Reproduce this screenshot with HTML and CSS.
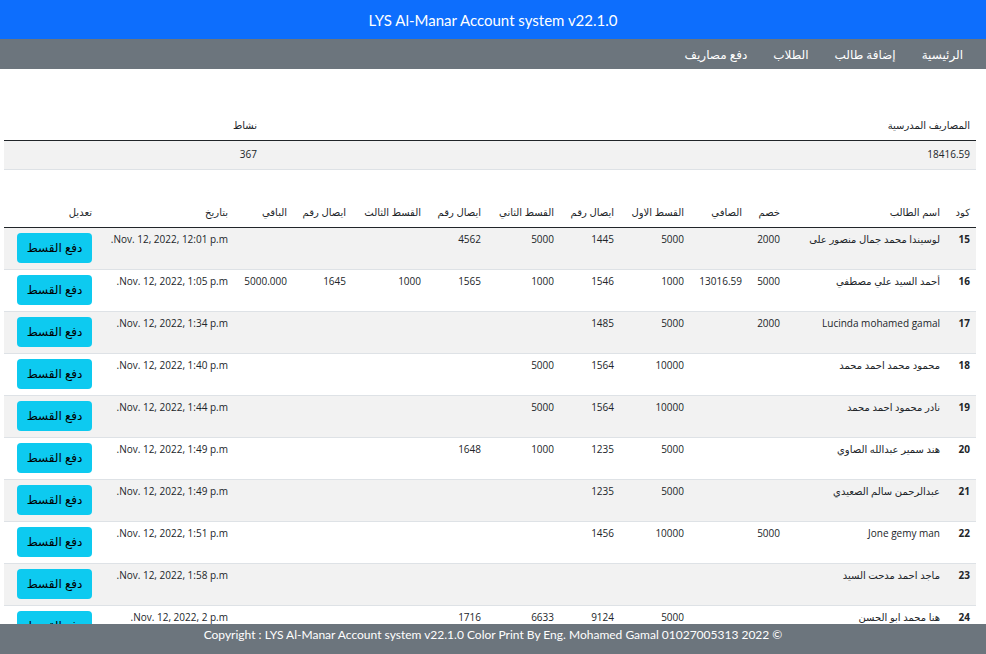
FILE: index.html
```html
<!DOCTYPE html>
<html lang="ar" dir="rtl">
<head>
<meta charset="utf-8">
<title>LYS Al-Manar Account system</title>
<link rel="stylesheet" href="styles.css">
</head>
<body>
<header class="topbar">
  <span class="brand" dir="ltr">LYS Al-Manar Account system v22.1.0</span>
</header>
<nav class="menu">
  <a class="menu-link" href="#">الرئيسية</a>
  <a class="menu-link" href="#">إضافة طالب</a>
  <a class="menu-link" href="#">الطلاب</a>
  <a class="menu-link" href="#">دفع مصاريف</a>
</nav>
<main class="content">
  <table class="grid summary">
    <colgroup>
      <col class="s-fees">
      <col class="s-act">
    </colgroup>
    <thead>
      <tr><th>المصاريف المدرسية</th><th>نشاط</th></tr>
    </thead>
    <tbody>
      <tr class="stripe"><td>18416.59</td><td>367</td></tr>
    </tbody>
  </table>

  <table class="grid students">
    <colgroup>
      <col class="c-code">
      <col class="c-name">
      <col class="c-disc">
      <col class="c-net">
      <col class="c-i1">
      <col class="c-r1">
      <col class="c-i2">
      <col class="c-r2">
      <col class="c-i3">
      <col class="c-r3">
      <col class="c-rest">
      <col class="c-date">
      <col class="c-edit">
    </colgroup>
    <thead>
      <tr>
        <th>كود</th><th>اسم الطالب</th><th>خصم</th><th>الصافي</th><th>القسط الاول</th><th>ايصال رقم</th><th>القسط الثاني</th><th>ايصال رقم</th><th>القسط الثالث</th><th>ايصال رقم</th><th>الباقي</th><th>بتاريخ</th><th>تعديل</th>
      </tr>
    </thead>
    <tbody>
      <tr class="stripe">
        <th class="code">15</th><td>لوسيندا محمد جمال منصور على</td><td>2000</td><td></td><td>5000</td><td>1445</td><td>5000</td><td>4562</td><td></td><td></td><td></td><td>Nov. 12, 2022, 12:01 p.m.</td><td><a class="pay" href="#">دفع القسط</a></td>
      </tr>
      <tr>
        <th class="code">16</th><td>أحمد السيد علي مصطفي</td><td>5000</td><td>13016.59</td><td>1000</td><td>1546</td><td>1000</td><td>1565</td><td>1000</td><td>1645</td><td>5000.000</td><td>Nov. 12, 2022, 1:05 p.m.</td><td><a class="pay" href="#">دفع القسط</a></td>
      </tr>
      <tr class="stripe">
        <th class="code">17</th><td>Lucinda mohamed gamal</td><td>2000</td><td></td><td>5000</td><td>1485</td><td></td><td></td><td></td><td></td><td></td><td>Nov. 12, 2022, 1:34 p.m.</td><td><a class="pay" href="#">دفع القسط</a></td>
      </tr>
      <tr>
        <th class="code">18</th><td>محمود محمد احمد محمد</td><td></td><td></td><td>10000</td><td>1564</td><td>5000</td><td></td><td></td><td></td><td></td><td>Nov. 12, 2022, 1:40 p.m.</td><td><a class="pay" href="#">دفع القسط</a></td>
      </tr>
      <tr class="stripe">
        <th class="code">19</th><td>نادر محمود احمد محمد</td><td></td><td></td><td>10000</td><td>1564</td><td>5000</td><td></td><td></td><td></td><td></td><td>Nov. 12, 2022, 1:44 p.m.</td><td><a class="pay" href="#">دفع القسط</a></td>
      </tr>
      <tr>
        <th class="code">20</th><td>هند سمير عبدالله الصاوي</td><td></td><td></td><td>5000</td><td>1235</td><td>1000</td><td>1648</td><td></td><td></td><td></td><td>Nov. 12, 2022, 1:49 p.m.</td><td><a class="pay" href="#">دفع القسط</a></td>
      </tr>
      <tr class="stripe">
        <th class="code">21</th><td>عبدالرحمن سالم الصعيدي</td><td></td><td></td><td>5000</td><td>1235</td><td></td><td></td><td></td><td></td><td></td><td>Nov. 12, 2022, 1:49 p.m.</td><td><a class="pay" href="#">دفع القسط</a></td>
      </tr>
      <tr>
        <th class="code">22</th><td>Jone gemy man</td><td>5000</td><td></td><td>10000</td><td>1456</td><td></td><td></td><td></td><td></td><td></td><td>Nov. 12, 2022, 1:51 p.m.</td><td><a class="pay" href="#">دفع القسط</a></td>
      </tr>
      <tr class="stripe">
        <th class="code">23</th><td>ماجد احمد مدحت السيد</td><td></td><td></td><td></td><td></td><td></td><td></td><td></td><td></td><td></td><td>Nov. 12, 2022, 1:58 p.m.</td><td><a class="pay" href="#">دفع القسط</a></td>
      </tr>
      <tr>
        <th class="code">24</th><td>هنا محمد ابو الحسن</td><td></td><td></td><td>5000</td><td>9124</td><td>6633</td><td>1716</td><td></td><td></td><td></td><td>Nov. 12, 2022, 2 p.m.</td><td><a class="pay" href="#">دفع القسط</a></td>
      </tr>
    </tbody>
  </table>
</main>
<footer class="footer">
  <span dir="ltr">Copyright : LYS Al-Manar Account system v22.1.0 Color Print By Eng. Mohamed Gamal 01027005313 2022 ©</span>
</footer>
</body>
</html>
```

FILE: styles.css
```css
html, body {
  margin: 0;
  padding: 0;
}

body {
  font-family: "Open Sans", "DejaVu Sans", sans-serif;
  color: #212529;
  background: #fff;
}

.topbar {
  height: 39px;
  background: #0d6efd;
  color: #fff;
  display: flex;
  align-items: center;
  justify-content: center;
  font-family: Lato, "DejaVu Sans", sans-serif;
  font-size: 15px;
}

.menu {
  height: 30px;
  background: #6c757d;
  display: flex;
  align-items: center;
  padding: 0 10px;
}

.menu-link {
  color: #fff;
  text-decoration: none;
  font-size: 12px;
  padding: 0 13px;
}

.content {
  padding: 43px 10px 0 4px;
}

.grid {
  width: 100%;
  border-collapse: collapse;
  table-layout: fixed;
  font-size: 10px;
  line-height: 18px;
}

.grid th,
.grid td {
  padding: 4px 6px 6px;
  text-align: right;
  vertical-align: top;
  font-weight: normal;
  border-bottom: 1px solid #dee2e6;
  white-space: nowrap;
  overflow: hidden;
}

.grid thead th {
  border-bottom: 1px solid #212529;
}

.grid .stripe {
  background: #f2f2f2;
}

.grid th.code {
  font-weight: bold;
}

.summary {
  margin-bottom: 29px;
}

.s-fees { width: 713px; }
.s-act { width: 259px; }

.c-code { width: 30px; }
.c-name { width: 160px; }
.c-disc { width: 38px; }
.c-net { width: 58px; }
.c-i1 { width: 70px; }
.c-r1 { width: 60px; }
.c-i2 { width: 73px; }
.c-r2 { width: 60px; }
.c-i3 { width: 75px; }
.c-r3 { width: 59px; }
.c-rest { width: 59px; }
.c-date { width: 136px; }
.c-edit { width: 94px; }

.students tbody td,
.students tbody th {
  padding: 5px 6px 6px;
  line-height: 13px;
}

.pay {
  display: block;
  width: 75px;
  height: 30px;
  line-height: 30px;
  background: #0dcaf0;
  color: #000;
  border-radius: 4px;
  text-align: center;
  text-decoration: none;
  font-size: 12px;
}

.footer {
  position: fixed;
  left: 0;
  right: 0;
  bottom: 0;
  height: 30px;
  background: #6c757d;
  color: #fff;
  text-align: center;
  font-family: Lato, "DejaVu Sans", sans-serif;
  font-size: 12px;
  line-height: 22px;
  box-sizing: border-box;
}
```
